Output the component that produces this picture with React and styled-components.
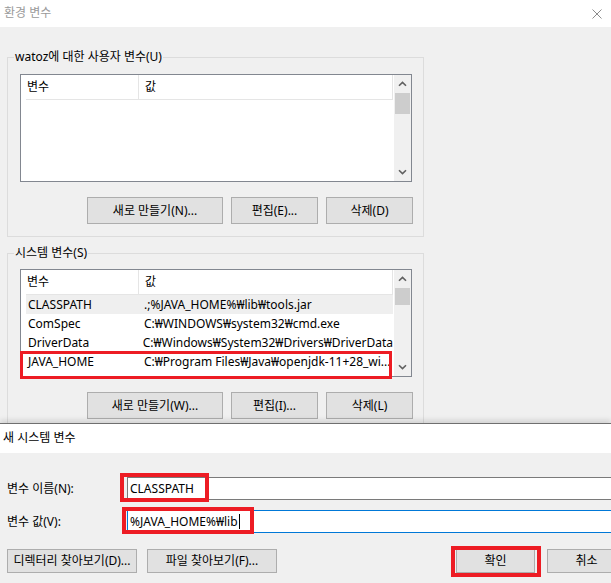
import React from "react";
import styled, { createGlobalStyle } from "styled-components";

const GlobalStyle = createGlobalStyle`
  html, body {
    margin: 0;
    padding: 0;
  }
  body {
    width: 611px;
    height: 583px;
    overflow: hidden;
    background: #f0f0f0;
    font-family: "Noto Sans", "Noto Sans CJK KR", sans-serif;
    font-size: 12px;
    line-height: 16px;
    color: #000;
  }
  * {
    box-sizing: border-box;
  }
`;

const systemVars = [
  { name: "CLASSPATH", value: ".;%JAVA_HOME%₩lib₩tools.jar", active: true },
  { name: "ComSpec", value: "C:₩WINDOWS₩system32₩cmd.exe" },
  { name: "DriverData", value: "C:₩Windows₩System32₩Drivers₩DriverData" },
  { name: "JAVA_HOME", value: "C:₩Program Files₩Java₩openjdk-11+28_wi..." },
];

const Chevron = ({ down }) => (
  <svg width="9" height="6" viewBox="0 0 9 6">
    <path
      d={down ? "M1 1.2 L4.5 4.6 L8 1.2" : "M1 4.8 L4.5 1.4 L8 4.8"}
      fill="none"
      stroke="#606060"
      strokeWidth="1.6"
    />
  </svg>
);

const CloseIcon = () => (
  <svg width="10" height="10" viewBox="0 0 10 10">
    <path d="M0.5 0.5 L9.5 9.5 M9.5 0.5 L0.5 9.5" stroke="#8c8c8c" strokeWidth="1" />
  </svg>
);

const VarList = ({ rows, thumb, children }) => (
  <StyledList>
    <StyledListBody>
      <StyledHeader>
        <StyledHeadCell>변수</StyledHeadCell>
        <StyledHeadCell $last>값</StyledHeadCell>
      </StyledHeader>
      {rows.map((r) => (
        <StyledRow key={r.name} $active={r.active}>
          <StyledNameCell>{r.name}</StyledNameCell>
          <StyledValueCell>{r.value}</StyledValueCell>
        </StyledRow>
      ))}
    </StyledListBody>
    <StyledScrollbar>
      <StyledArrow>
        <Chevron />
      </StyledArrow>
      <StyledThumb $h={thumb} />
      <StyledArrow $bottom>
        <Chevron down />
      </StyledArrow>
    </StyledScrollbar>
    {children}
  </StyledList>
);

const App = () => {
  return (
    <>
      <GlobalStyle />
      <StyledWindow>
        <StyledTitleBar $inactive $pad={4} $h={27}>
          <span>환경 변수</span>
          <CloseIcon />
        </StyledTitleBar>
        <StyledContent>
          <StyledGroup $padTop={16}>
            <StyledGroupLabel>watoz에 대한 사용자 변수(U)</StyledGroupLabel>
            <VarList rows={[]} thumb={21} />
            <StyledButtonRow>
              <StyledButton $w={136}>새로 만들기(N)...</StyledButton>
              <StyledButton $w={87}>편집(E)...</StyledButton>
              <StyledButton $w={87}>삭제(D)</StyledButton>
            </StyledButtonRow>
          </StyledGroup>
          <StyledGroup $padTop={15} $gapTop={16}>
            <StyledGroupLabel>시스템 변수(S)</StyledGroupLabel>
            <VarList rows={systemVars} thumb={17}>
              <StyledMark $left={-1} $top={81} $w={372} $h={28} $t={3} />
            </VarList>
            <StyledButtonRow>
              <StyledButton $w={136}>새로 만들기(W)...</StyledButton>
              <StyledButton $w={87}>편집(I)...</StyledButton>
              <StyledButton $w={87}>삭제(L)</StyledButton>
            </StyledButtonRow>
          </StyledGroup>
        </StyledContent>
      </StyledWindow>

      <StyledDialog>
        <StyledTitleBar $pad={3} $h={29}>
          <span>새 시스템 변수</span>
        </StyledTitleBar>
        <StyledForm>
          <StyledFieldRow>
            <StyledFieldLabel>변수 이름(N):</StyledFieldLabel>
            <StyledField>
              CLASSPATH
              <StyledMark $left={-8} $top={-5} $w={89} $h={29} $t={4} />
            </StyledField>
          </StyledFieldRow>
          <StyledFieldRow>
            <StyledFieldLabel>변수 값(V):</StyledFieldLabel>
            <StyledField $focused>
              %JAVA_HOME%₩lib
              <StyledCaret />
              <StyledMark $left={-6} $top={-4} $w={132} $h={27} $t={4} />
            </StyledField>
          </StyledFieldRow>
          <StyledDialogButtons>
            <StyledButtonGroup>
              <StyledButton $w={130} $h={24}>디렉터리 찾아보기(D)...</StyledButton>
              <StyledButton $w={130} $h={24}>파일 찾아보기(F)...</StyledButton>
            </StyledButtonGroup>
            <StyledButtonGroup $right>
              <StyledMarked>
                <StyledButton $w={79} $h={24}>확인</StyledButton>
                <StyledMark $left={-5} $top={-3} $w={90} $h={31} $t={4} />
              </StyledMarked>
              <StyledButton $w={79} $h={24}>취소</StyledButton>
            </StyledButtonGroup>
          </StyledDialogButtons>
        </StyledForm>
      </StyledDialog>
    </>
  );
};

const StyledWindow = styled.div`
  height: 423px;
  overflow: hidden;
  background: #f0f0f0;
`;

const StyledTitleBar = styled.div`
  height: ${(p) => p.$h}px;
  background: #fff;
  display: flex;
  align-items: center;
  justify-content: space-between;
  padding: 0 9px 2px ${(p) => p.$pad}px;
  color: ${(p) => (p.$inactive ? "#9a9a9a" : "#000")};
  svg {
    margin-top: 2px;
  }
`;

const StyledContent = styled.div`
  padding: 30px 0 0 7px;
`;

const StyledGroup = styled.div`
  position: relative;
  width: 417px;
  margin-top: ${(p) => p.$gapTop || 0}px;
  padding: ${(p) => p.$padTop}px 10px 12px 12px;
  border: 1px solid #dcdcdc;
`;

const StyledGroupLabel = styled.span`
  position: absolute;
  top: -9px;
  left: 6px;
  padding: 0 1px;
  background: #f0f0f0;
  white-space: nowrap;
`;

const StyledList = styled.div`
  position: relative;
  width: 392px;
  height: 108px;
  display: flex;
  background: #fff;
  border: 1px solid #828790;
`;

const StyledListBody = styled.div`
  flex: 1;
  padding: 0 1px 0 5px;
  overflow: hidden;
`;

const StyledHeader = styled.div`
  display: flex;
  height: 25px;
  align-items: center;
  border-bottom: 1px solid #e5e5e5;
  border-right: 1px solid #e5e5e5;
`;

const StyledHeadCell = styled.div`
  height: 100%;
  display: flex;
  align-items: center;
  width: ${(p) => (p.$last ? "auto" : "113px")};
  padding-left: ${(p) => (p.$last ? 6 : 1)}px;
  border-right: ${(p) => (p.$last ? "none" : "1px solid #e5e5e5")};
`;

const StyledRow = styled.div`
  display: flex;
  align-items: center;
  height: 19px;
  background: ${(p) => (p.$active ? "#efefef" : "#fff")};
  white-space: nowrap;
`;

const StyledNameCell = styled.div`
  width: 113px;
  padding-left: 2px;
`;

const StyledValueCell = styled.div`
  padding-left: 5px;
`;

const StyledScrollbar = styled.div`
  width: 17px;
  display: flex;
  flex-direction: column;
  background: #f0f0f0;
`;

const StyledArrow = styled.div`
  height: 18px;
  display: flex;
  align-items: center;
  justify-content: center;
  margin-top: ${(p) => (p.$bottom ? "auto" : "0")};
`;

const StyledThumb = styled.div`
  height: ${(p) => p.$h}px;
  margin: 0 1px;
  background: #cdcdcd;
`;

const StyledButtonRow = styled.div`
  display: flex;
  justify-content: flex-end;
  gap: 8px;
  margin-top: 15px;
`;

const StyledButton = styled.button`
  width: ${(p) => p.$w}px;
  height: ${(p) => p.$h || 27}px;
  padding: 0;
  background: #e1e1e1;
  border: 1px solid #adadad;
  font: inherit;
  color: #000;
  white-space: nowrap;
`;

const StyledMark = styled.span`
  position: absolute;
  left: ${(p) => p.$left}px;
  top: ${(p) => p.$top}px;
  width: ${(p) => p.$w}px;
  height: ${(p) => p.$h}px;
  border: ${(p) => p.$t}px solid #ed1c24;
  pointer-events: none;
  z-index: 2;
`;

const StyledDialog = styled.div`
  position: relative;
  height: 160px;
  overflow: hidden;
  background: #f0f0f0;
  border-top: 1px solid #6f6f6f;
  box-shadow: 0 -3px 5px rgba(0, 0, 0, 0.12);
`;

const StyledForm = styled.div`
  padding: 24px 0 0 7px;
`;

const StyledFieldRow = styled.div`
  display: flex;
  align-items: center;
  height: 23px;
  margin-bottom: 10px;
`;

const StyledFieldLabel = styled.div`
  width: 120px;
  flex: none;
`;

const StyledField = styled.div`
  position: relative;
  flex: none;
  width: 500px;
  height: 23px;
  display: flex;
  align-items: center;
  padding-left: 2px;
  background: #fff;
  border: 1px solid ${(p) => (p.$focused ? "#0078d7" : "#7a7a7a")};
  white-space: nowrap;
`;

const StyledCaret = styled.span`
  display: inline-block;
  width: 1px;
  height: 15px;
  margin-left: 1px;
  background: #000;
`;

const StyledDialogButtons = styled.div`
  display: flex;
  margin-top: 16px;
  width: 640px;
`;

const StyledButtonGroup = styled.div`
  display: flex;
  gap: ${(p) => (p.$right ? 12 : 10)}px;
  margin-left: ${(p) => (p.$right ? 179 : 0)}px;
`;

const StyledMarked = styled.div`
  position: relative;
  display: flex;
`;

export default App;
